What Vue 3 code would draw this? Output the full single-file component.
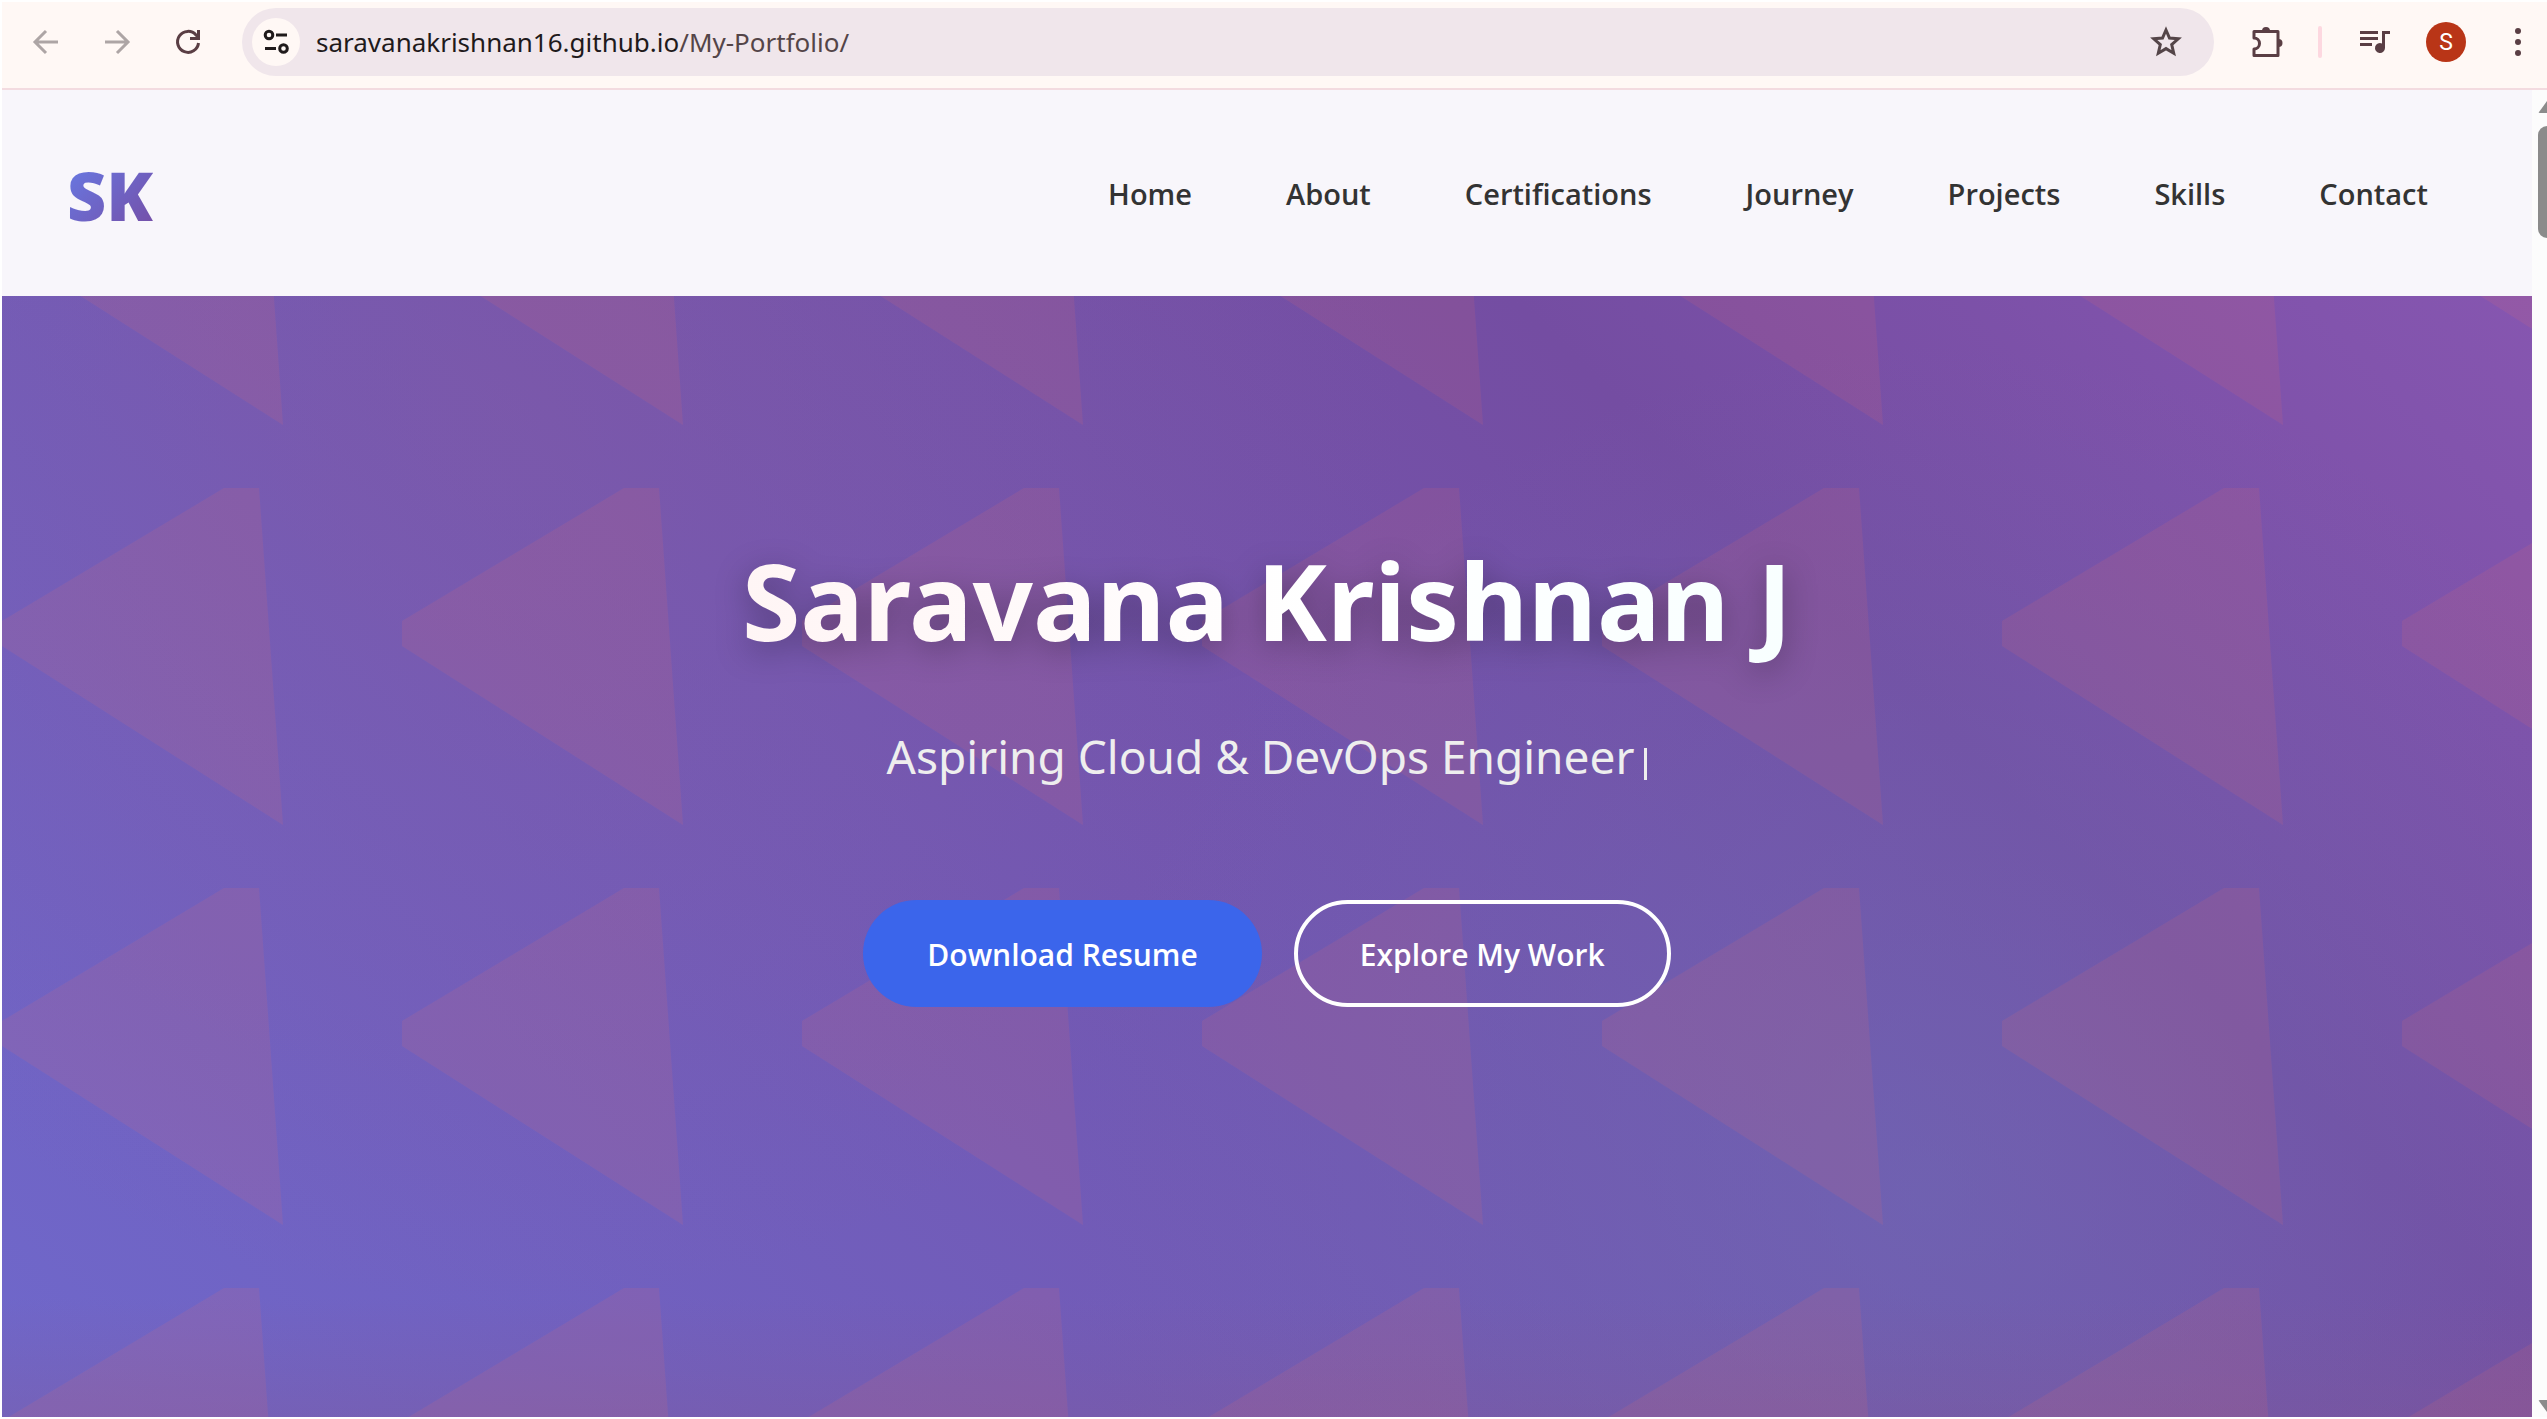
<script setup>
const links = ['Home', 'About', 'Certifications', 'Journey', 'Projects', 'Skills', 'Contact']
</script>

<template>
  <div class="window">
    <div class="toolbar">
      <button class="tool" aria-label="Back">
        <svg width="28" height="28" viewBox="0 0 28 28" fill="none" stroke="#ada5a5" stroke-width="3"><path d="M26 14H4M14 3L3 14L14 25" /></svg>
      </button>
      <button class="tool" aria-label="Forward">
        <svg width="28" height="28" viewBox="0 0 28 28" fill="none" stroke="#ada5a5" stroke-width="3"><path d="M2 14H24M14 3L25 14L14 25" /></svg>
      </button>
      <button class="tool" aria-label="Reload">
        <svg width="28" height="28" viewBox="0 0 28 28" fill="none" stroke="#5a3e44" stroke-width="3"><path d="M24.500 15A10.500 10.500 0 1 1 22 7L24.500 9.500M24.500 2V10.500H16" /></svg>
      </button>
      <div class="omnibox">
        <button class="site" aria-label="Site information">
          <svg width="28" height="28" viewBox="0 0 28 28" fill="none" stroke="#1f1a1b" stroke-width="3"><circle cx="7" cy="7" r="3.800" /><path d="M14 7H25M3 20.500H14" /><circle cx="21.500" cy="20.500" r="3.800" /></svg>
        </button>
        <div class="url">saravanakrishnan16.github.io<span class="path">/My-Portfolio/</span></div>
        <button class="tool star" aria-label="Bookmark this page">
          <svg width="34" height="34" viewBox="0 0 34 34" fill="none" stroke="#544548" stroke-width="3"><path d="M17 5L20.500 13L29.300 13.800L22.700 19.600L24.700 28.200L17 23.600L9.300 28.200L11.300 19.600L4.700 13.800L13.500 13Z" /></svg>
        </button>
      </div>
      <div class="actions">
        <button class="tool" aria-label="Extensions">
          <svg width="36" height="36" viewBox="0 0 36 36" fill="none" stroke="#5a3e44" stroke-width="3"><path d="M5 7.500H29V31.500H5V25A5.500 5.500 0 0 0 5 14Z" stroke-linejoin="round" /><path d="M13 7A4 4 0 0 1 21 7ZM29.500 15A4 4 0 0 1 29.500 23Z" fill="#5a3e44" stroke="none" /></svg>
        </button>
        <span class="divider"></span>
        <button class="tool" aria-label="Media controls">
          <svg width="32" height="28" viewBox="0 0 32 28" fill="#5a3e44"><path d="M1 3H19V6H1ZM1 9H19V12H1ZM1 15H13V18H1ZM23 3H31V6H26V20A5 5 0 1 1 23 15.400Z" /></svg>
        </button>
        <button class="avatar" aria-label="Profile">S</button>
        <button class="tool" aria-label="Menu">
          <svg width="8" height="30" viewBox="0 0 8 30" fill="#5a3e44"><circle cx="4" cy="4" r="3" /><circle cx="4" cy="15" r="3" /><circle cx="4" cy="26" r="3" /></svg>
        </button>
      </div>
    </div>

    <div class="viewport">
      <div class="page">
        <header class="header">
          <a class="logo" href="#home">SK</a>
          <nav class="nav">
            <a v-for="link in links" :key="link" :href="'#' + link.toLowerCase()">{{ link }}</a>
          </nav>
        </header>
        <main class="hero">
          <svg class="pattern" aria-hidden="true">
            <defs>
              <pattern id="arrows" width="400" height="400" patternUnits="userSpaceOnUse" y="192">
                <path d="M0 133L222 0H257L281 337L0 158Z" fill="#ff6b5a" fill-opacity="0.11" />
              </pattern>
            </defs>
            <rect width="100%" height="100%" fill="url(#arrows)" />
          </svg>
          <h1>Saravana Krishnan J</h1>
          <p class="role">Aspiring Cloud &amp; DevOps Engineer<span class="caret"></span></p>
          <div class="buttons">
            <a class="btn primary" href="#resume">Download Resume</a>
            <a class="btn outline" href="#projects">Explore My Work</a>
          </div>
        </main>
      </div>
      <div class="scrollbar" aria-hidden="true">
        <svg width="15" height="14" viewBox="0 0 15 14" fill="#8b8b8b"><path d="M7 12L15 1V13H8Q6 13 7 12Z" /></svg>
        <span class="thumb"></span>
        <svg width="15" height="14" viewBox="0 0 15 14" fill="#8b8b8b"><path d="M7 2L15 13V1H8Q6 1 7 2Z" /></svg>
      </div>
    </div>
  </div>
</template>

<style>
body {
  background: #fff;
}
</style>

<style scoped>
* {
  box-sizing: border-box;
}
.window {
  display: flex;
  flex-direction: column;
  min-height: 100vh;
  padding: 2px 0 2px 2px;
  font-family: "Open Sans", "Noto Sans", sans-serif;
}
button {
  margin: 0;
  padding: 0;
  border: 0;
  background: none;
  font: inherit;
}
a {
  text-decoration: none;
}
svg {
  display: block;
}
.toolbar {
  display: flex;
  align-items: center;
  height: 88px;
  padding: 0 25px 6px 30px;
  background: #fff8f5;
  border-bottom: 2px solid #f3dbe0;
}
.toolbar > .tool {
  margin-right: 43px;
}
.toolbar > .tool:nth-child(3) {
  margin-right: 40px;
}
.omnibox {
  display: flex;
  flex: 1;
  align-items: center;
  height: 68px;
  padding: 0 31px 0 10px;
  border-radius: 34px;
  background: #f0e6eb;
}
.site {
  display: grid;
  place-items: center;
  width: 48px;
  height: 48px;
  border-radius: 50%;
  background: #fff8f5;
}
.url {
  flex: 1;
  margin-left: 16px;
  font-family: "Noto Sans", sans-serif;
  font-size: 26px;
  color: #1f1a1b;
}
.path {
  color: #544548;
}
.actions {
  display: flex;
  align-items: center;
  margin-left: 35px;
}
.divider {
  width: 4px;
  height: 32px;
  margin: 0 37px 0 33px;
  border-radius: 2px;
  background: #fdd8e0;
}
.avatar {
  width: 40px;
  height: 40px;
  margin: 0 48px 0 35px;
  border-radius: 50%;
  background: #b93517;
  color: #fff;
  font-family: Roboto, sans-serif;
  font-size: 23px;
}
.viewport {
  display: flex;
  flex: 1;
}
.page {
  display: flex;
  flex: 1;
  flex-direction: column;
}
.header {
  display: flex;
  align-items: center;
  justify-content: space-between;
  height: 206px;
  padding: 0 104px 0 65px;
  background: #f8f6fb;
}
.logo {
  padding-top: 2px;
  background: linear-gradient(135deg, #667eea, #764ba2);
  background-clip: text;
  color: transparent;
  font-size: 68px;
  font-weight: 800;
}
.nav {
  display: flex;
  gap: 94px;
}
.nav a {
  color: #333;
  font-size: 29px;
  font-weight: 600;
}
.hero {
  position: relative;
  display: flex;
  flex: 1;
  flex-direction: column;
  align-items: center;
  padding-top: 220px;
  color: #fff;
  background:
    linear-gradient(to top, rgba(130, 85, 145, 0.3), transparent 120px),
    radial-gradient(circle at 20% 10%, rgba(138, 88, 155, 0.35), transparent 900px),
    radial-gradient(circle at 76% 80%, rgba(108, 112, 184, 0.5), transparent 850px),
    linear-gradient(45deg, #6f68cb, #744da2 72%, #8656b0);
}
.pattern {
  position: absolute;
  inset: 0;
  width: 100%;
  height: 100%;
}
h1,
.role,
.buttons {
  position: relative;
  margin: 0;
}
h1 {
  background: linear-gradient(90deg, #fff5f5, #fff 55%, #f8ffff);
  background-clip: text;
  color: transparent;
  font-family: "Noto Sans", sans-serif;
  font-size: 106px;
  font-weight: 700;
  line-height: 168px;
  filter: drop-shadow(0 8px 16px rgba(0, 0, 0, 0.3));
}
.role {
  display: flex;
  align-items: center;
  margin-top: 32px;
  color: #eee;
  font-family: "Noto Sans", sans-serif;
  font-size: 46px;
  line-height: 80px;
}
.caret {
  width: 3px;
  height: 32px;
  margin: 16px 0 0 10px;
  background: #eee;
}
.buttons {
  display: flex;
  gap: 32px;
  margin-top: 104px;
}
.btn {
  display: grid;
  place-items: center;
  height: 107px;
  padding: 2px 64px 0;
  border-radius: 54px;
  color: #fff;
  font-size: 30px;
  font-weight: 600;
}
.primary {
  background: #3b65eb;
}
.outline {
  padding: 2px 62px 0;
  border: 4px solid #fff;
}
.scrollbar {
  display: flex;
  flex-direction: column;
  align-items: flex-end;
  width: 15px;
  padding: 10px 0 4px;
  background: #fcfcfc;
}
.thumb {
  width: 9px;
  height: 112px;
  margin: 12px 0 auto;
  border-radius: 9px 0 0 9px;
  background: #8b8b8b;
}
</style>
